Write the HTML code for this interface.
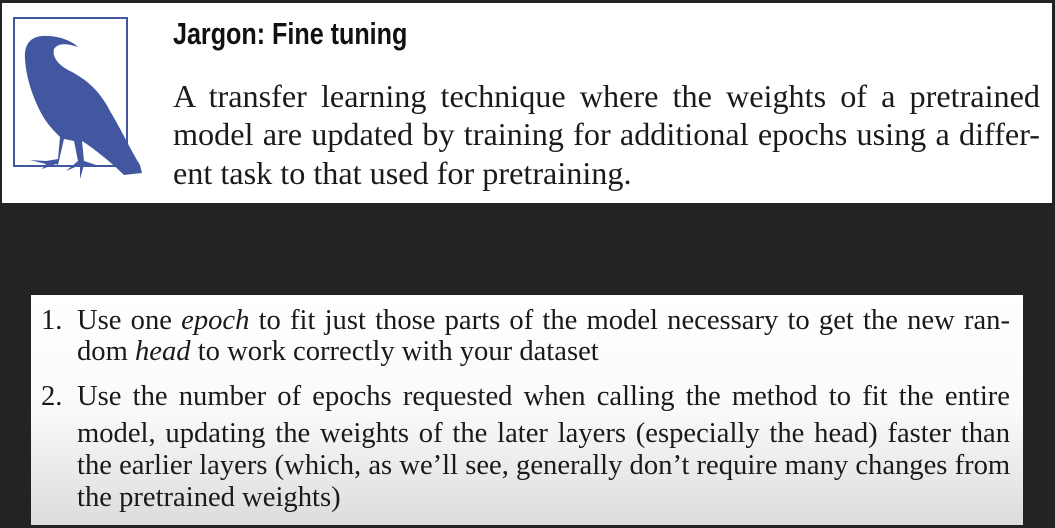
<!DOCTYPE html>
<html><head><style>
body{margin:0;width:1055px;height:528px;background:#232325;position:relative;overflow:hidden;font-family:"Liberation Serif",serif;}
#top{position:absolute;left:2px;top:3px;width:1050px;height:200px;background:#fff;}
#title{position:absolute;left:171px;top:13px;font-family:"Liberation Sans",sans-serif;font-weight:bold;font-size:31px;transform:scaleX(0.81);transform-origin:left;color:#111;white-space:nowrap;}
.pl{position:absolute;left:171px;width:867px;font-size:32.2px;line-height:38px;text-align:justify;text-align-last:justify;color:#1a1a1a;white-space:nowrap;}
#bot{position:absolute;left:31px;top:295px;width:992px;height:230px;background:linear-gradient(#fff,#fafafa 50%,#dcdcdc);}
.bl{position:absolute;left:46px;width:933px;font-size:28.6px;line-height:31px;text-align:justify;text-align-last:justify;color:#1a1a1a;white-space:nowrap;}
.n{position:absolute;left:-36px;}
.left{text-align-last:left;}
</style></head><body>
<div id="top">
<svg style="position:absolute;left:0;top:0" width="150" height="200">
<rect x="12" y="15" width="113" height="148" fill="none" stroke="#4357a0" stroke-width="2"/>
<path d="M40,33 C28,34 22,42 23,56 C24,74 30,92 38,108 C44,120 52,128 58,134 L56,156 L44,158 L28,157 L44,161 L40,166 L54,161 L56,162 L62,136 L72,138 L76,158 L64,168 L78,162 L78,176 L82,162 L94,162 L82,158 L80,138 C90,144 110,160 122,172 L140,170 L138,162 C128,146 120,128 108,108 C98,88 84,76 68,68 C56,62 50,54 52,46 C56,40 64,40 76,44 C70,38 56,32 40,33 Z" fill="#4357a0"/>
</svg>
<div id="title">Jargon: Fine tuning</div>
<div class="pl" style="top:74px">A transfer learning technique where the weights of a pretrained</div>
<div class="pl" style="top:112px">model are updated by training for additional epochs using a differ-</div>
<div class="pl left" style="top:151px">ent task to that used for pretraining.</div>
</div>
<div id="bot">
<div class="bl" style="top:10px"><span class="n">1.</span>Use one <i>epoch</i> to fit just those parts of the model necessary to get the new ran-</div>
<div class="bl left" style="top:41px">dom <i>head</i> to work correctly with your dataset</div>
<div class="bl" style="top:86px"><span class="n">2.</span>Use the number of epochs requested when calling the method to fit the entire</div>
<div class="bl" style="top:123px">model, updating the weights of the later layers (especially the head) faster than</div>
<div class="bl" style="top:155px">the earlier layers (which, as we’ll see, generally don’t require many changes from</div>
<div class="bl left" style="top:187px">the pretrained weights)</div>
</div>
</body></html>
